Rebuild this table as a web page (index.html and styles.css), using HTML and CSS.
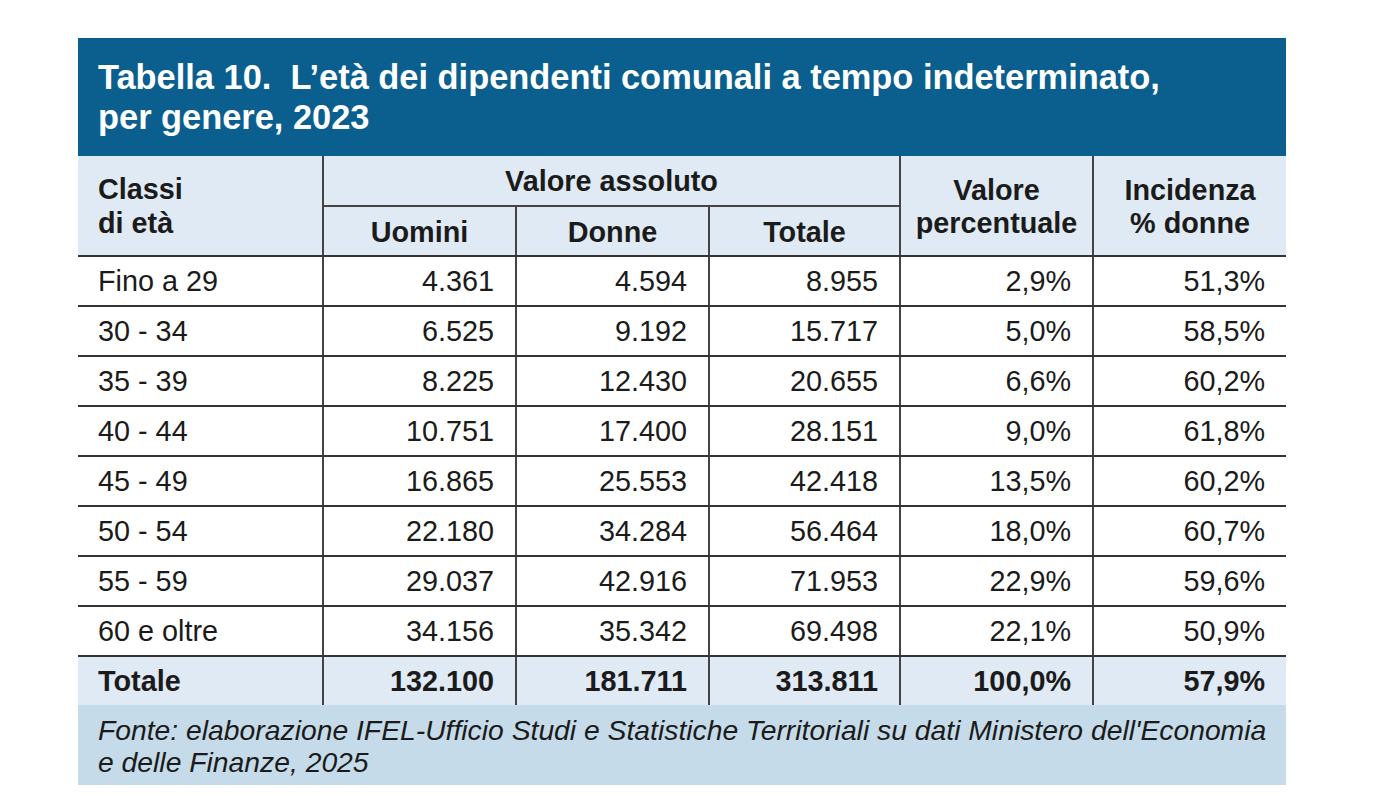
FILE: index.html
```html
<!DOCTYPE html>
<html lang="it">
<head>
<meta charset="utf-8">
<title>Tabella 10</title>
<link rel="stylesheet" href="styles.css">
</head>
<body>
<div class="page">
  <div class="card">
    <div class="title">Tabella 10.&nbsp; L’età dei dipendenti comunali a tempo indeterminato,<br>per genere, 2023</div>
    <table class="data">
      <colgroup>
        <col class="c-first"><col class="c-num"><col class="c-num"><col class="c-num3"><col class="c-num"><col class="c-num">
      </colgroup>
      <thead>
        <tr class="h1">
          <th rowspan="2" class="left">Classi<br>di età</th>
          <th colspan="3" class="group">Valore assoluto</th>
          <th rowspan="2" class="mid">Valore<br>percentuale</th>
          <th rowspan="2" class="mid">Incidenza<br>% donne</th>
        </tr>
        <tr class="h2">
          <th>Uomini</th>
          <th>Donne</th>
          <th>Totale</th>
        </tr>
      </thead>
      <tbody>
        <tr><td>Fino a 29</td><td>4.361</td><td>4.594</td><td>8.955</td><td>2,9%</td><td>51,3%</td></tr>
        <tr><td>30 - 34</td><td>6.525</td><td>9.192</td><td>15.717</td><td>5,0%</td><td>58,5%</td></tr>
        <tr><td>35 - 39</td><td>8.225</td><td>12.430</td><td>20.655</td><td>6,6%</td><td>60,2%</td></tr>
        <tr><td>40 - 44</td><td>10.751</td><td>17.400</td><td>28.151</td><td>9,0%</td><td>61,8%</td></tr>
        <tr><td>45 - 49</td><td>16.865</td><td>25.553</td><td>42.418</td><td>13,5%</td><td>60,2%</td></tr>
        <tr><td>50 - 54</td><td>22.180</td><td>34.284</td><td>56.464</td><td>18,0%</td><td>60,7%</td></tr>
        <tr><td>55 - 59</td><td>29.037</td><td>42.916</td><td>71.953</td><td>22,9%</td><td>59,6%</td></tr>
        <tr><td>60 e oltre</td><td>34.156</td><td>35.342</td><td>69.498</td><td>22,1%</td><td>50,9%</td></tr>
        <tr class="total"><td>Totale</td><td>132.100</td><td>181.711</td><td>313.811</td><td>100,0%</td><td>57,9%</td></tr>
      </tbody>
    </table>
    <div class="source">Fonte: elaborazione IFEL-Ufficio Studi e Statistiche Territoriali su dati Ministero dell'Economia<br>e delle Finanze, 2025</div>
  </div>
</div>
</body>
</html>
```

FILE: styles.css
```css
html, body {
  margin: 0;
  padding: 0;
  background: #ffffff;
}
.page {
  padding: 38px 0 0 78px;
}
.card {
  width: 1208px;
  font-family: "Liberation Sans", Arial, sans-serif;
  color: #1b1b1b;
}
.title {
  background: #0a5f8e;
  color: #ffffff;
  font-weight: bold;
  font-size: 34.4px;
  line-height: 40px;
  padding: 19px 20px 19px 20px;
  height: 80px;
  white-space: nowrap;
}
.data {
  width: 1208px;
  border-collapse: collapse;
  table-layout: fixed;
  font-size: 28.8px;
}
.c-first { width: 245px; }
.c-num { width: 193px; }
.c-num3 { width: 191px; }
.data th {
  background: #e0eaf4;
  font-weight: bold;
  padding: 0;
  border-left: 2px solid #444;
  line-height: 32px;
}
.data th.left {
  border-left: none;
  text-align: left;
  padding: 16px 20px 0 20px;
  vertical-align: top;
  line-height: 34px;
}
.data th.mid {
  vertical-align: top;
  padding-top: 18px;
  line-height: 33px;
}
.data tr.h1 th.group {
  height: 49px;
  vertical-align: middle;
  border-bottom: 2px solid #444;
}
.data tr.h2 th {
  height: 46px;
  padding-top: 2px;
  vertical-align: middle;
}
.data thead tr.h2 th, .data thead th.left, .data thead th.mid {
  border-bottom: 2px solid #333;
}
.data td {
  height: 48px;
  padding: 0 21px 0 20px;
  text-align: right;
  border-left: 2px solid #444;
  border-bottom: 2px solid #333;
  white-space: nowrap;
}
.data td:first-child {
  text-align: left;
  border-left: none;
}
.data tr.total td {
  background: #e0eaf4;
  font-weight: bold;
  border-bottom: none;
}
.source {
  background: #c6dbe9;
  font-style: italic;
  font-size: 28.3px;
  line-height: 32px;
  padding: 9px 20px 7px 20px;
  white-space: nowrap;
}
```
